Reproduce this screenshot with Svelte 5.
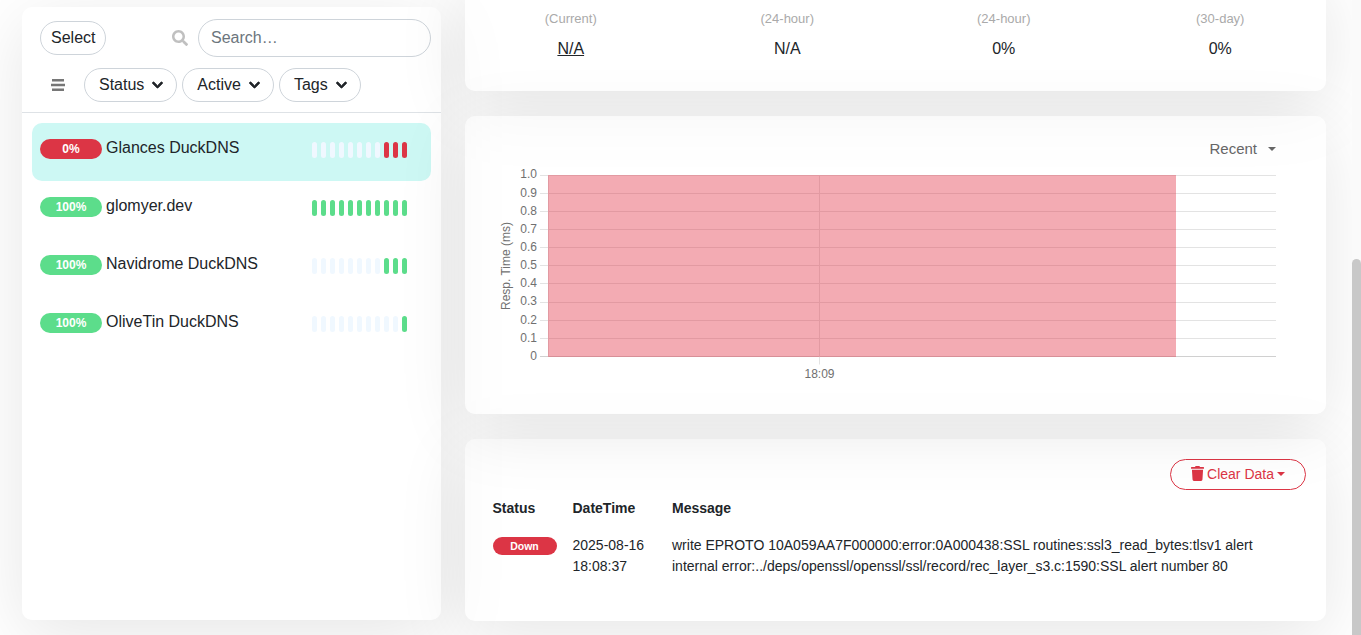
<script>
    const filters = ['Status', 'Active', 'Tags'];

    // beats: e = empty, d = down, u = up
    const monitors = [
        { name: 'Glances DuckDNS', pct: '0%', down: true, active: true, beats: 'eeeeeeeeddd' },
        { name: 'glomyer.dev', pct: '100%', beats: 'uuuuuuuuuuu' },
        { name: 'Navidrome DuckDNS', pct: '100%', beats: 'eeeeeeeeuuu' },
        { name: 'OliveTin DuckDNS', pct: '100%', beats: 'eeeeeeeeeeu' },
    ];

    const stats = [
        { label: '(Current)', value: 'N/A', link: true },
        { label: '(24-hour)', value: 'N/A' },
        { label: '(24-hour)', value: '0%' },
        { label: '(30-day)', value: '0%' },
    ];

    // chart geometry, gridlines snap to whole pixels like a canvas chart
    const ticks = ['1.0', '0.9', '0.8', '0.7', '0.6', '0.5', '0.4', '0.3', '0.2', '0.1', '0'];
    const gridY = (i) => Math.floor(i * 18.15) + 59.5;
    const labelY = (i) => Math.round(i * 18.15 + 62.4);
</script>

<div class="page">
    <aside class="card list-card">
        <div class="list-header">
            <div class="row-one">
                <button class="pill select-btn">Select</button>
                <svg class="search-icon" viewBox="0 0 512 512" width="16" height="16">
                    <path fill="#c0c0c0" d="M505 442.700 405.300 343c-4.500-4.500-10.600-7-17-7H372c27.600-35.300 44-79.700 44-128C416 93.100 322.900 0 208 0S0 93.100 0 208s93.100 208 208 208c48.300 0 92.700-16.400 128-44v16.300c0 6.400 2.500 12.500 7 17l99.700 99.700c9.400 9.400 24.600 9.400 33.900 0l28.300-28.300c9.400-9.400 9.400-24.600.1-34zM208 336c-70.700 0-128-57.200-128-128 0-70.700 57.200-128 128-128 70.700 0 128 57.200 128 128 0 70.700-57.200 128-128 128z"/>
                </svg>
                <input class="search" placeholder="Search…" />
            </div>
            <div class="row-two">
                <svg class="menu-icon" viewBox="0 0 14 12" width="14" height="12">
                    <path fill="#777" d="M1 0h12v2.500H1zM0 4.800h14v2.400H0zM1 9.500h12V12H1z"/>
                </svg>
                <div class="filters">
                    {#each filters as f}
                        <button class="pill filter">
                            {f}
                            <svg viewBox="0 0 448 512" width="11" height="12">
                                <path fill="#212529" stroke="#212529" stroke-width="36" d="M207 381.500 12.700 187.100c-9.400-9.400-9.400-24.600 0-33.900l22.700-22.700c9.400-9.400 24.500-9.400 33.900 0L224 284.500l154.700-154c9.400-9.300 24.500-9.300 33.900 0l22.700 22.700c9.400 9.400 9.400 24.600 0 33.900L241 381.500c-9.400 9.400-24.600 9.400-34 0z"/>
                            </svg>
                        </button>
                    {/each}
                </div>
            </div>
        </div>

        <ul class="monitors">
            {#each monitors as m}
                <li class="monitor" class:active={m.active}>
                    <span class="badge" class:down={m.down}>{m.pct}</span>
                    <span class="name">{m.name}</span>
                    <span class="beats">
                        {#each m.beats.split('') as b}
                            <i class="beat {b}"></i>
                        {/each}
                    </span>
                </li>
            {/each}
        </ul>
    </aside>

    <main class="content">
        <section class="card stats-card">
            <div class="stats">
                {#each stats as s}
                    <div class="stat">
                        <span class="stat-label">{s.label}</span>
                        <span class="stat-value" class:link={s.link}>{s.value}</span>
                    </div>
                {/each}
            </div>
        </section>

        <section class="card chart-card">
            <div class="period">
                Recent
                <span class="caret"></span>
            </div>
            <svg class="chart" width="861" height="298" viewBox="0 0 861 298">
                {#each ticks as t, i}
                    <line x1="75" x2="811" y1={gridY(i)} y2={gridY(i)} stroke={i === 10 ? '#d0d0d0' : '#e3e3e3'} />
                    <text class="tick" x="72" y={labelY(i)} text-anchor="end">{t}</text>
                {/each}
                <line x1="83.500" x2="83.500" y1={gridY(0)} y2={gridY(10)} stroke="#e3e3e3" />
                <line x1="354.500" x2="354.500" y1={gridY(0)} y2={gridY(10) + 8} stroke="#e3e3e3" />
                <rect x="83" y="59" width="628" height="182" fill="#e12d41" fill-opacity="0.4" />
                <text class="tick" x="354.500" y="262" text-anchor="middle">18:09</text>
                <text class="tick" transform="translate(45 150) rotate(-90)" text-anchor="middle">Resp. Time (ms)</text>
            </svg>
        </section>

        <section class="card events-card">
            <div class="events-top">
                <button class="clear">
                    <svg viewBox="0 0 448 512" width="13" height="15">
                        <path fill="#dc3545" d="M432 32H312l-9.400-18.700A24 24 0 0 0 281.100 0H166.800a23.700 23.700 0 0 0-21.400 13.300L136 32H16A16 16 0 0 0 0 48v32a16 16 0 0 0 16 16h416a16 16 0 0 0 16-16V48a16 16 0 0 0-16-16zM53.200 467a48 48 0 0 0 47.900 45h245.800a48 48 0 0 0 47.900-45L416 128H32z"/>
                    </svg>
                    Clear Data
                    <span class="caret red"></span>
                </button>
            </div>
            <table>
                <thead>
                    <tr><th class="col-status">Status</th><th class="col-date">DateTime</th><th>Message</th></tr>
                </thead>
                <tbody>
                    <tr>
                        <td><span class="event-badge">Down</span></td>
                        <td>2025-08-16<br />18:08:37</td>
                        <td>write EPROTO 10A059AA7F000000:error:0A000438:SSL routines:ssl3_read_bytes:tlsv1 alert internal error:../deps/openssl/openssl/ssl/record/rec_layer_s3.c:1590:SSL alert number 80</td>
                    </tr>
                </tbody>
            </table>
        </section>
    </main>

    <div class="scrollbar"><div class="thumb"></div></div>
</div>

<style>
    :global(body) {
        margin: 0;
        background: #fff;
        font-family: "Liberation Sans", Arial, sans-serif;
        color: #212529;
    }
    .page {
        position: relative;
        display: flex;
        gap: 24px;
        height: 635px;
        padding-left: 22px;
        overflow: hidden;
    }
    .card {
        background: rgba(255, 255, 255, 0.45);
        border-radius: 10px;
        box-shadow: 0 15px 70px rgba(0, 0, 0, 0.1);
    }

    /* left column */
    .list-card {
        flex: none;
        width: 419px;
        height: 613px;
        margin-top: 7px;
    }
    .list-header {
        height: 106px;
        box-sizing: border-box;
        padding: 12px 10px 0 18px;
        border-bottom: 1px solid #dee2e6;
    }
    .row-one {
        display: flex;
        align-items: center;
    }
    .pill {
        font: inherit;
        font-size: 16px;
        color: #212529;
        background: #fff;
        border: 1px solid #ced4da;
        border-radius: 50rem;
        height: 34px;
        padding: 0 10px;
    }
    .select-btn {
        width: 66px;
    }
    .search-icon {
        margin-left: 66px;
    }
    .search {
        font: inherit;
        font-size: 16px;
        width: 233px;
        height: 38px;
        box-sizing: border-box;
        margin-left: 10px;
        padding: 0 12px;
        border: 1px solid #ced4da;
        border-radius: 19px;
        outline: none;
        background: #fff;
    }
    .search::placeholder {
        color: #6c757d;
    }
    .row-two {
        display: flex;
        align-items: center;
        margin-top: 11px;
    }
    .menu-icon {
        margin-left: 11px;
    }
    .filters {
        display: flex;
        gap: 5px;
        margin-left: 19px;
    }
    .filter {
        display: flex;
        align-items: center;
        gap: 8px;
        padding: 0 13px 0 14px;
    }
    .monitors {
        list-style: none;
        margin: 10px 10px 0;
        padding: 0;
    }
    .monitor {
        position: relative;
        display: flex;
        height: 58px;
        box-sizing: border-box;
        padding: 16px 8px 0;
        border-radius: 10px;
        font-size: 16px;
    }
    .monitor.active {
        background: #cdf8f4;
    }
    .badge {
        flex: none;
        width: 62px;
        height: 20px;
        border-radius: 10px;
        background: #5cdd8b;
        color: #fff;
        font-size: 12px;
        font-weight: 700;
        line-height: 20px;
        text-align: center;
    }
    .badge.down {
        background: #dc3545;
    }
    .name {
        margin-left: 4px;
        line-height: 18px;
    }
    .beats {
        position: absolute;
        left: 280px;
        top: 19px;
        display: flex;
        gap: 4px;
    }
    .beat {
        width: 5px;
        height: 16px;
        border-radius: 3px;
    }
    .beat.e { background: #f0f8ff; }
    .beat.d { background: #dc3545; }
    .beat.u { background: #5cdd8b; }

    /* right column */
    .content {
        flex: none;
        width: 861px;
        margin-top: -29px;
        display: flex;
        flex-direction: column;
        gap: 25px;
    }
    .stats-card {
        height: 120px;
    }
    .stats {
        display: grid;
        grid-template-columns: repeat(4, 216.5px);
        margin-left: -2.500px;
        padding-top: 40px;
        text-align: center;
    }
    .stat {
        display: flex;
        flex-direction: column;
        align-items: center;
    }
    .stat-label {
        font-size: 13px;
        line-height: 16px;
        color: #aaa;
    }
    .stat-value {
        font-size: 16px;
        line-height: 18px;
        margin-top: 13px;
    }
    .stat-value.link {
        text-decoration: underline;
    }
    .chart-card {
        position: relative;
        height: 298px;
    }
    .period {
        position: absolute;
        right: 50px;
        top: 25px;
        display: flex;
        align-items: center;
        gap: 11px;
        font-size: 15px;
        line-height: 16px;
        color: #666;
    }
    .caret {
        width: 0;
        height: 0;
        border: 4px solid transparent;
        border-top-color: #666;
        border-bottom: 0;
    }
    .caret.red {
        border-top-color: #dc3545;
    }
    .chart {
        display: block;
    }
    .tick {
        font-size: 12px;
        fill: #707070;
    }
    .events-card {
        height: 182px;
        box-sizing: border-box;
        padding: 20px 20px 0 19.500px;
        font-size: 14px;
    }
    .events-top {
        display: flex;
        justify-content: flex-end;
    }
    .clear {
        display: flex;
        align-items: center;
        gap: 3px;
        width: 136px;
        height: 31px;
        box-sizing: border-box;
        justify-content: center;
        font: inherit;
        color: #dc3545;
        background: #fff;
        border: 1px solid #dc3545;
        border-radius: 16px;
        padding: 0 0 2px;
    }
    table {
        border-collapse: collapse;
        table-layout: fixed;
        width: 100%;
        margin-top: 8px;
        line-height: 21px;
    }
    th {
        text-align: left;
        font-weight: 700;
        padding: 0 8px 16px 8px;
    }
    td {
        vertical-align: top;
        padding: 0 8px;
    }
    .col-status {
        width: 64px;
    }
    .col-date {
        width: 83.500px;
    }
    .event-badge {
        display: block;
        width: 64px;
        height: 18px;
        margin-top: 2px;
        border-radius: 9px;
        background: #dc3545;
        color: #fff;
        font-size: 10.500px;
        font-weight: 700;
        line-height: 18px;
        text-align: center;
    }

    .scrollbar {
        position: absolute;
        top: 0;
        right: 0;
        bottom: 0;
        width: 9px;
        background: #fafafa;
    }
    .thumb {
        position: absolute;
        top: 259px;
        left: 0;
        right: 0;
        bottom: 0;
        border-radius: 5px 5px 0 0;
        background: #c8c8c8;
    }
</style>
